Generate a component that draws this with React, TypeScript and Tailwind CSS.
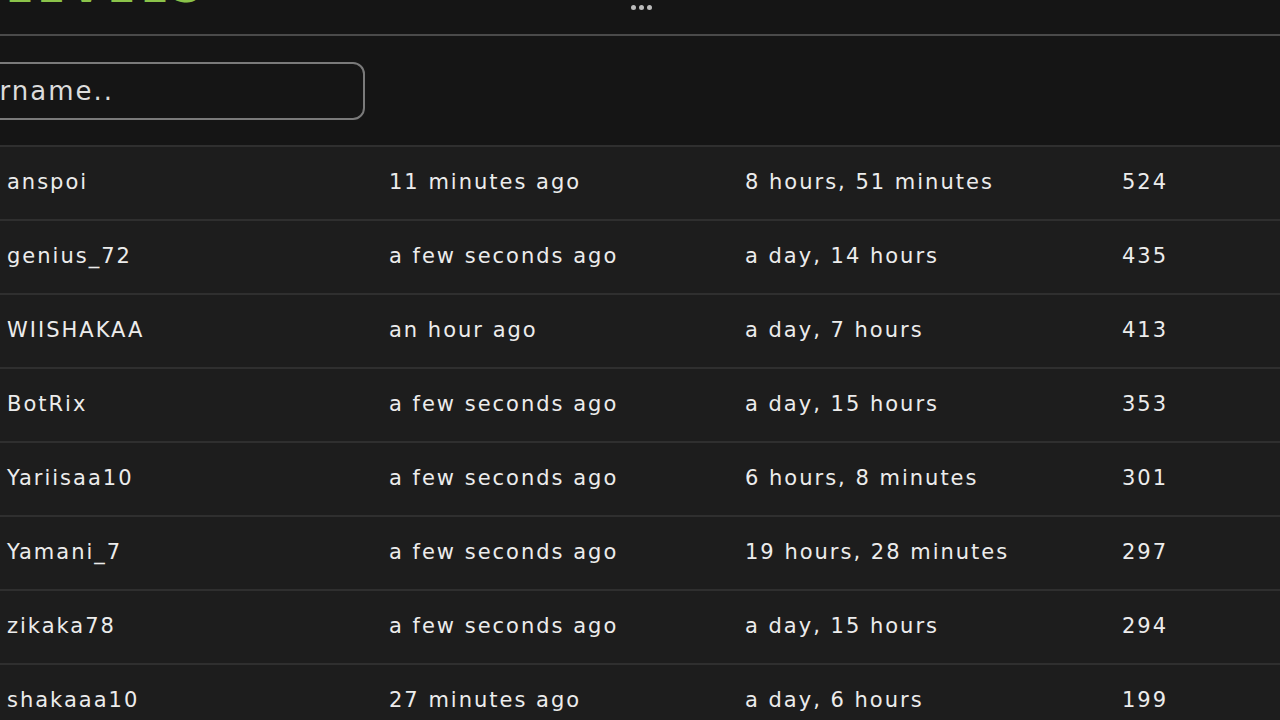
import React from "react";

interface Row {
  name: string;
  lastSeen: string;
  watchTime: string;
  points: number;
}

const rows: Row[] = [
  { name: "anspoi", lastSeen: "11 minutes ago", watchTime: "8 hours, 51 minutes", points: 524 },
  { name: "genius_72", lastSeen: "a few seconds ago", watchTime: "a day, 14 hours", points: 435 },
  { name: "WIISHAKAA", lastSeen: "an hour ago", watchTime: "a day, 7 hours", points: 413 },
  { name: "BotRix", lastSeen: "a few seconds ago", watchTime: "a day, 15 hours", points: 353 },
  { name: "Yariisaa10", lastSeen: "a few seconds ago", watchTime: "6 hours, 8 minutes", points: 301 },
  { name: "Yamani_7", lastSeen: "a few seconds ago", watchTime: "19 hours, 28 minutes", points: 297 },
  { name: "zikaka78", lastSeen: "a few seconds ago", watchTime: "a day, 15 hours", points: 294 },
  { name: "shakaaa10", lastSeen: "27 minutes ago", watchTime: "a day, 6 hours", points: 199 },
];

const App: React.FC = () => {
  return (
    <div
      className="w-[1280px] h-[720px] overflow-hidden bg-[#151515] text-[#ececec]"
      style={{ fontFamily: '"DejaVu Sans", "Liberation Sans", sans-serif' }}
    >
      {/* header, scrolled mostly out of view */}
      <div className="relative h-[34px]">
        <div className="absolute left-[6px] top-[-32px] text-[40px] font-bold leading-[40px] tracking-[6px] text-[#8bc34a]">
          LEVELS
        </div>
        <div className="flex justify-center gap-[3px] pt-[5px] pl-[2px]">
          <span className="w-[5px] h-[5px] rounded-full bg-[#bbbbbb]" />
          <span className="w-[5px] h-[5px] rounded-full bg-[#bbbbbb]" />
          <span className="w-[5px] h-[5px] rounded-full bg-[#bbbbbb]" />
        </div>
      </div>
      <div className="h-[2px] bg-[#4a4a4a]" />

      {/* search */}
      <div className="h-[109px] pt-[26px]">
        <div className="-ml-[200px] w-[565px] h-[58px] rounded-[12px] border-2 border-[#7a7a7a] flex items-center">
          <span className="block w-[312px] text-right text-[26px] tracking-[2px] text-[#dcdcdc]">
            Search username..
          </span>
        </div>
      </div>

      {/* table */}
      <div className="bg-[#1d1d1d]">
        {rows.map((r) => (
          <div
            key={r.name}
            className="grid grid-cols-[389px_356px_377px_1fr] items-center h-[74px] border-t-2 border-[#2f2f2f] text-[21px] tracking-[2px]"
          >
            <span className="pl-[7px]">{r.name}</span>
            <span>{r.lastSeen}</span>
            <span>{r.watchTime}</span>
            <span>{r.points}</span>
          </div>
        ))}
      </div>
    </div>
  );
};

export default App;
